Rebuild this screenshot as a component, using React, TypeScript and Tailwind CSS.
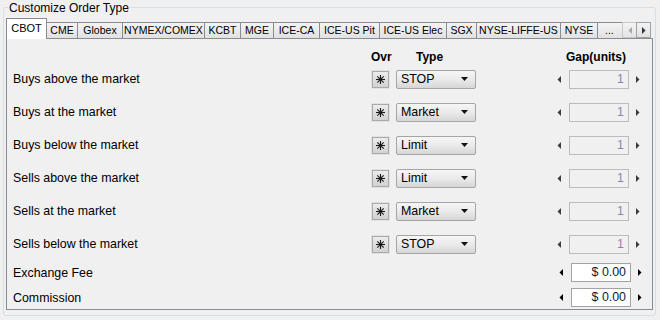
import React from 'react';

// tab strip: left edge (px) of each tab, last entry is where the "..." tab ends
const TABS = ['CBOT', 'CME', 'Globex', 'NYMEX/COMEX', 'KCBT', 'MGE', 'ICE-CA', 'ICE-US Pit', 'ICE-US Elec', 'SGX', 'NYSE-LIFFE-US', 'NYSE', '...'];
const EDGES = [6, 46, 77, 122, 204, 240, 273, 319, 379, 446, 476, 560, 597, 622];

const ROWS = [
  { label: 'Buys above the market', type: 'STOP' },
  { label: 'Buys at the market', type: 'Market' },
  { label: 'Buys below the market', type: 'Limit' },
  { label: 'Sells above the market', type: 'Limit' },
  { label: 'Sells at the market', type: 'Market' },
  { label: 'Sells below the market', type: 'STOP' },
];

function Arrow({ dir, color = '#404040' }: { dir: 'left' | 'right'; color?: string }) {
  return (
    <svg width="4" height="7" viewBox="0 0 4 7">
      {dir === 'left' ? (
        <polygon points="4,0 4,7 0.5,3.5" fill={color} />
      ) : (
        <polygon points="0,0 0,7 3.5,3.5" fill={color} />
      )}
    </svg>
  );
}

function OvrButton() {
  return (
    <div className="w-[19px] h-[19px] border border-[#e2e2e2] bg-white flex">
      <div className="flex-1 border border-[#a9a9a9] bg-linear-to-b from-[#ececec] to-[#d2d2d2] flex items-center justify-center">
        <svg width="9" height="9" viewBox="0 0 9 9" stroke="#1a1a1a" strokeWidth="1.1">
          <line x1="4.5" y1="0" x2="4.5" y2="9" />
          <line x1="0" y1="4.5" x2="9" y2="4.5" />
          <line x1="1.3" y1="1.3" x2="7.7" y2="7.7" />
          <line x1="7.7" y1="1.3" x2="1.3" y2="7.7" />
        </svg>
      </div>
    </div>
  );
}

function Combo({ value }: { value: string }) {
  return (
    <div className="ml-[6px] w-[80px] h-[19px] border border-[#a5a5a5] rounded-[2px] bg-linear-to-b from-[#f6f6f6] via-[#eaeaea] to-[#d6d6d6] flex items-center pl-[4px] pr-[7px]">
      <span className="flex-1 text-[12.4px] leading-none text-black">{value}</span>
      <svg width="7" height="4" viewBox="0 0 7 4">
        <polygon points="0,0 7,0 3.5,4" fill="#111" />
      </svg>
    </div>
  );
}

function Spinner({ value, active }: { value: string; active?: boolean }) {
  return (
    <div className={`flex items-center h-[19px] ${active ? 'ml-[80px]' : 'ml-[78px]'}`}>
      <div className="w-[10px] flex justify-center">
        <Arrow dir="left" color={active ? '#000' : '#3c3c3c'} />
      </div>
      <div
        className={`ml-[5px] w-[60px] h-[19px] border flex items-center justify-end pr-[4px] text-[12.4px] leading-none ${
          active ? 'bg-white border-[#a3a3a3] text-[#0c1a33]' : 'bg-[#f0f0f0] border-[#bcbcbc] text-[#8f83a8]'
        }`}
      >
        {value}
      </div>
      <div className="ml-[4px] w-[10px] flex justify-center">
        <Arrow dir="right" color={active ? '#000' : '#3c3c3c'} />
      </div>
    </div>
  );
}

export default function App() {
  return (
    <div className="w-[660px] h-[320px] bg-[#f0f0f0] pt-[7px] pl-[3px] font-['Liberation_Sans',Arial,sans-serif] text-[12.4px] text-black overflow-hidden">
      {/* Group box */}
      <div className="relative w-[653px] h-[309px] border border-[#d5dfe5] rounded-[3px] pt-[10px] pl-[2px]">
        <span className="absolute left-[4px] top-[-6px] px-[1px] bg-[#f0f0f0] text-[12px] leading-[13px]">
          Customize Order Type
        </span>

        {/* Tab strip */}
        <div className="flex items-end h-[20px] relative z-10">
          {TABS.map((t, i) => {
            const w = EDGES[i + 1] - EDGES[i] + 1;
            const selected = i === 0;
            const last = i === TABS.length - 1;
            return (
              <div
                key={t}
                style={{ width: w }}
                className={`shrink-0 flex items-center justify-center border-[#898c95] border-t border-l text-[10.5px] leading-none whitespace-nowrap overflow-hidden ${
                  i > 0 ? '-ml-[1px]' : ''
                } ${last ? 'border-r-0 justify-start pl-[7px]' : 'border-r'} ${
                  selected
                    ? 'h-[21px] mb-[-1px] bg-white pb-[2px] text-[11px]'
                    : 'h-[16px] bg-linear-to-b from-[#f4f4f4] to-[#e1e1e1]'
                }`}
              >
                {t}
              </div>
            );
          })}
          <div className="shrink-0 flex h-[16px] ml-[-1px] bg-[#f0f0f0]">
            <div className="w-[15px] border border-[#c9c9c9] bg-linear-to-b from-[#f4f4f4] to-[#e4e4e4] flex items-center justify-center">
              <Arrow dir="left" color="#a8a8a8" />
            </div>
            <div className="w-[15px] -ml-[1px] border border-[#a0a0a0] bg-linear-to-b from-[#f4f4f4] to-[#e0e0e0] flex items-center justify-center">
              <Arrow dir="right" color="#333" />
            </div>
          </div>
        </div>

        {/* Tab page */}
        <div className="w-[647px] h-[272px] border border-[#898c95] bg-[#f0f0f0] pt-[8px] pl-[6px] flex flex-col">
          <div className="flex items-center h-[20px] font-bold text-[12px]">
            <div className="w-[358px]" />
            <span className="w-[45px]">Ovr</span>
            <span className="w-[150px]">Type</span>
            <span>Gap(units)</span>
          </div>

          <div className="mt-[2px] flex flex-col gap-[14px]">
            {ROWS.map((r) => (
              <div key={r.label} className="flex items-center h-[19px] pt-[1px]">
                <span className="w-[358px]">{r.label}</span>
                <OvrButton />
                <Combo value={r.type} />
                <Spinner value="1" />
              </div>
            ))}
          </div>

          <div className="mt-[10px] flex items-center h-[19px]">
            <span className="w-[463px] pt-[1px]">Exchange Fee</span>
            <Spinner value="$ 0.00" active />
          </div>
          <div className="mt-[6px] flex items-center h-[19px]">
            <span className="w-[463px] pt-[1px]">Commission</span>
            <Spinner value="$ 0.00" active />
          </div>
        </div>
      </div>
    </div>
  );
}
